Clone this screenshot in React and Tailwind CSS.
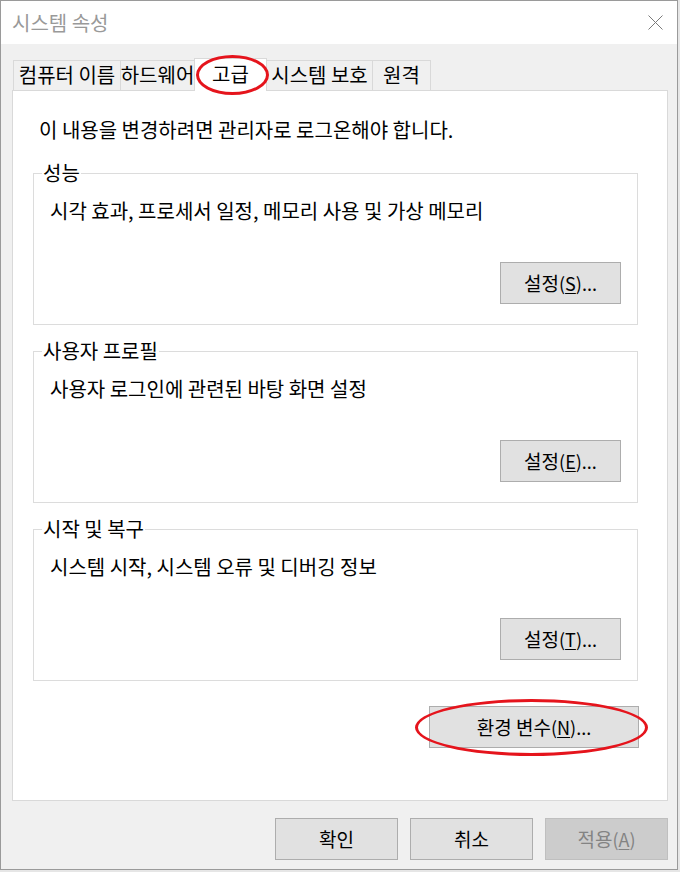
import React from 'react';

const Btn = ({ children, className = '', disabled = false }) => (
  <button
    className={`h-[42px] border text-[18px] leading-[24px] ${
      disabled
        ? 'bg-[#cccccc] border-[#bfbfbf] text-[#838383]'
        : 'bg-[#e1e1e1] border-[#adadad] text-black'
    } ${className}`}
  >
    {children}
  </button>
);

const Key = ({ children }) => <span className="underline underline-offset-2 decoration-1">{children}</span>;

const Group = ({ title, desc, hotkey, className = '' }) => (
  <fieldset className={`ml-[20px] w-[605px] border border-[#dcdcdc] pb-[20px] ${className}`}>
    <legend className="ml-[8px] px-px text-[20px] leading-[24px]">{title}</legend>
    <div className="mt-[14px] pl-[16px] text-[20px] leading-[24px]">{desc}</div>
    <div className="mt-[39px] flex justify-end pr-[16px]">
      <Btn className="w-[121px]">
        <span className="text-[19px]">설정</span>(<Key>{hotkey}</Key>)...
      </Btn>
    </div>
  </fieldset>
);

const tabs = [
  { label: '컴퓨터 이름', w: 'w-[108px]' },
  { label: '하드웨어', w: 'w-[75px]' },
  { label: '고급', w: 'w-[73px]', active: true },
  { label: '시스템 보호', w: 'w-[107px]' },
  { label: '원격', w: 'w-[59px]' },
];

export default function App() {
  return (
    <div className="w-[680px] h-[872px] bg-[#e6e6e6] font-['Noto_Sans_CJK_KR','Noto_Sans',sans-serif] text-black">
      <div className="w-[678px] h-[870px] border border-[#9a9a9a] bg-[#f0f0f0] flex flex-col">
        {/* title bar */}
        <div className="h-[43px] bg-white flex items-center justify-between pl-[11px] pr-[14px]">
          <span className="text-[20px] text-[#999999]">시스템 속성</span>
          <svg width="15" height="15" viewBox="0 0 15 15">
            <path d="M0.5 0.5 L14.5 14.5 M14.5 0.5 L0.5 14.5" stroke="#7a7a7a" strokeWidth="1" fill="none" />
          </svg>
        </div>

        <div className="pl-[11px] pt-[14px]">
          {/* tabs */}
          <div className="relative z-10 flex items-end h-[33px] -mb-px pl-px">
            {tabs.map((t, i) =>
              t.active ? (
                <div
                  key={t.label}
                  className={`relative ${t.w} h-[33px] -ml-px border-t border-l border-r border-[#d9d9d9] bg-white flex justify-center pt-[3px] text-[20px] leading-[24px]`}
                >
                  {t.label}
                  <div className="absolute left-[1px] top-[-4px] w-[73px] h-[40px] rounded-[50%] border-[3px] border-[#e5141c]" />
                </div>
              ) : (
                <div
                  key={t.label}
                  className={`${t.w} h-[30px] mb-px ${i === 0 ? '' : '-ml-px'} border-t border-l border-r border-[#d9d9d9] bg-[#f0f0f0] flex justify-center pt-[2px] text-[20px] leading-[24px] whitespace-nowrap overflow-hidden`}
                >
                  {t.label}
                </div>
              )
            )}
          </div>

          {/* panel */}
          <div className="w-[656px] h-[711px] bg-white border border-[#d9d9d9]">
            <div className="pt-[27px] pl-[26px] text-[20px] leading-[24px]">
              이 내용을 변경하려면 관리자로 로그온해야 합니다.
            </div>
            <Group className="mt-[19px]" title="성능" desc="시각 효과, 프로세서 일정, 메모리 사용 및 가상 메모리" hotkey="S" />
            <Group className="mt-[14px]" title="사용자 프로필" desc="사용자 로그인에 관련된 바탕 화면 설정" hotkey="E" />
            <Group className="mt-[14px]" title="시작 및 복구" desc="시스템 시작, 시스템 오류 및 디버깅 정보" hotkey="T" />
            <div className="mt-[25px] flex justify-end pr-[28px]">
              <div className="relative">
                <Btn className="w-[210px]">
                  <span className="text-[19px]">환경 변수</span>(<Key>N</Key>)...
                </Btn>
                <div className="absolute left-[-14px] top-[-7px] w-[233px] h-[57px] rounded-[50%] border-[3px] border-[#e5141c]" />
              </div>
            </div>
          </div>

          {/* footer buttons */}
          <div className="w-[656px] mt-[17px] flex justify-end gap-[12px]">
            <Btn className="w-[123px] text-[19px]">확인</Btn>
            <Btn className="w-[123px] text-[19px]">취소</Btn>
            <Btn className="w-[123px]" disabled>
              <span className="text-[19px]">적용</span>(<Key>A</Key>)
            </Btn>
          </div>
        </div>
      </div>
    </div>
  );
}
